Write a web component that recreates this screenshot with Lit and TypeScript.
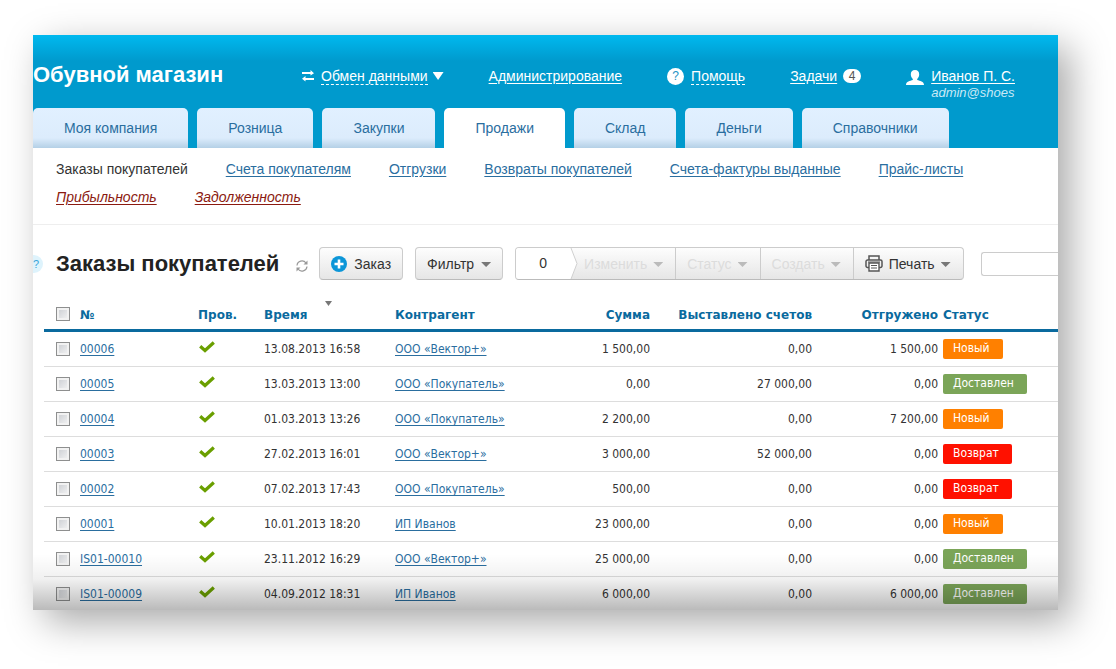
import { LitElement, html, css, svg } from "lit";
import { customElement } from "lit/decorators.js";
import { classMap } from "lit/directives/class-map.js";

interface Order {
  id: string;
  time: string;
  partner: string;
  sum: string;
  billed: string;
  shipped: string;
  status: "new" | "done" | "back";
}

const STATUS = { new: "Новый", done: "Доставлен", back: "Возврат" };

const order = (
  id: string, time: string, partner: string, sum: string,
  billed: string, shipped: string, status: Order["status"],
): Order => ({ id, time, partner, sum, billed, shipped, status });

const ORDERS: Order[] = [
  order("00006", "13.08.2013 16:58", "ООО «Вектор+»", "1 500,00", "0,00", "1 500,00", "new"),
  order("00005", "13.03.2013 13:00", "ООО «Покупатель»", "0,00", "27 000,00", "0,00", "done"),
  order("00004", "01.03.2013 13:26", "ООО «Покупатель»", "2 200,00", "0,00", "7 200,00", "new"),
  order("00003", "27.02.2013 16:01", "ООО «Вектор+»", "3 000,00", "52 000,00", "0,00", "back"),
  order("00002", "07.02.2013 17:43", "ООО «Покупатель»", "500,00", "0,00", "0,00", "back"),
  order("00001", "10.01.2013 18:20", "ИП Иванов", "23 000,00", "0,00", "0,00", "new"),
  order("IS01-00010", "23.11.2012 16:29", "ООО «Вектор+»", "25 000,00", "0,00", "0,00", "done"),
  order("IS01-00009", "04.09.2012 18:31", "ИП Иванов", "6 000,00", "0,00", "6 000,00", "done"),
];

const TABS = ["Моя компания", "Розница", "Закупки", "Продажи", "Склад", "Деньги", "Справочники"];

const SECTIONS = [
  { text: "Заказы покупателей", kind: "current" },
  { text: "Счета покупателям", kind: "" },
  { text: "Отгрузки", kind: "" },
  { text: "Возвраты покупателей", kind: "" },
  { text: "Счета-фактуры выданные", kind: "" },
  { text: "Прайс-листы", kind: "" },
  { text: "Прибыльность", kind: "report" },
  { text: "Задолженность", kind: "report" },
];

const icon = (w: number, h: number, body: unknown) =>
  html`<svg class="icon" width=${w} height=${h} viewBox="0 0 ${w} ${h}" aria-hidden="true">${body}</svg>`;

const swapIcon = icon(12, 12, svg`
  <path d="M0 2h8.500V0L12 3.200 8.500 5.500V4H0z M12 8H3.500V6L0 8.800 3.500 11.500V10H12z" fill="#fff"/>`);
const userIcon = icon(18, 15, svg`
  <path d="M9 0c2.800 0 4.200 1.800 4.200 4.300 0 2-.8 3.700-2 4.700v1c2.700.8 6.800 1.500 6.800 5H0c0-3.500 4.100-4.200 6.800-5V9c-1.200-1-2-2.700-2-4.700C4.800 1.800 6.200 0 9 0z" fill="#fff"/>`);
const refreshIcon = icon(14, 14, svg`
  <path d="M2 6.500a5 5 0 0 1 9-2.500M12 7.500a5 5 0 0 1-9 2.500" fill="none" stroke="#999" stroke-width="1.200"/>
  <path d="M12.500 1.500v4H8.500zM1.500 12.500V8.500H5.500z" fill="#999"/>`);
const plusIcon = icon(16, 16, svg`
  <circle cx="8" cy="8" r="8" fill="#0c96d8"/>
  <path d="M8 3.500v9M3.500 8h9" stroke="#fff" stroke-width="2.600"/>`);
const printIcon = icon(18, 17, svg`
  <path d="M4 5V1h10v4M4 12.500H2.500A1.500 1.500 0 0 1 1 11V6.500A1.500 1.500 0 0 1 2.500 5h13A1.500 1.500 0 0 1 17 6.500V11a1.500 1.500 0 0 1-1.500 1.500H14" fill="none" stroke="#555" stroke-width="1.500"/>
  <path d="M4 8h10v8H4z" fill="#fff" stroke="#555" stroke-width="1.400"/>
  <path d="M6 10.500h6M6 13h6" stroke="#555" stroke-width="1.200"/>
  <path d="M3 7h12" stroke="#555"/>`);
const okIcon = icon(16, 12, svg`
  <path d="M1.200 5.200l4.800 4.300L14.800 1.500" fill="none" stroke="#6a9f00" stroke-width="3.200"/>`);
const chevron = icon(8, 31, svg`
  <path d="M0 0h1l6 15.500L1 31H0z" fill="#fff"/>
  <path d="M1 0l6 15.500L1 31" fill="none" stroke="#d0d0d0"/>`);

@customElement("app-root")
export class AppRoot extends LitElement {
  static styles = css`
    :host {
      display: block;
      box-sizing: border-box;
      padding: 35px 58px 59px 33px;
      background: #fff;
      color: #333;
      font: 14px/16px "Liberation Sans", Arial, sans-serif;
    }
    * { box-sizing: border-box; }
    a { color: #2a6e9f; text-decoration: underline; text-underline-offset: 2px; }
    button { font: inherit; color: inherit; cursor: pointer; }
    .icon { display: block; flex: none; }
    .window {
      position: relative;
      background: #fff;
      box-shadow: 12px 12px 36px rgba(0, 0, 0, 0.34);
    }
    .clip { overflow: hidden; }
    .fade {
      position: absolute;
      inset: auto 0 0 0;
      height: 56px;
      pointer-events: none;
      background: linear-gradient(rgba(0, 0, 0, 0), rgba(0, 0, 0, 0.06) 45%, rgba(0, 0, 0, 0.27));
    }

    header {
      background: linear-gradient(#00b9ef, #009acd 26px);
    }
    .top {
      display: flex;
      gap: 45px;
      height: 73px;
      padding: 29px 43px 0 0;
      color: #fff;
      white-space: nowrap;
    }
    .brand {
      margin: 0 auto 0 0;
      font-size: 22px;
      line-height: 22px;
      font-weight: bold;
    }
    .item { display: flex; align-items: flex-start; gap: 7px; padding-top: 4px; }
    .item a { color: #fff; }
    .item .icon { margin-top: 2px; }
    .item .dashed { text-decoration: none; border-bottom: 1px dashed #fff; }
    .item .tri { margin: 4px 0 0 -2px; }
    .tri {
      width: 11px; height: 8px;
      background: currentColor;
      clip-path: polygon(0 0, 100% 0, 50% 100%);
    }
    .q {
      width: 17px; height: 17px;
      border-radius: 9px;
      background: #fff;
      color: #2492c4;
      font-size: 12px; line-height: 17px;
      text-align: center;
    }
    .badge {
      width: 18px; height: 14px;
      margin: 1px 0 0 -1px;
      border-radius: 7px;
      background: #fff;
      color: #555;
      font-size: 12px; line-height: 14px;
      text-align: center;
    }
    .account { display: grid; }
    .account em { font-size: 13px; line-height: 17px; color: #c9e9f6; }

    .tabs { display: flex; gap: 9px; height: 40px; }
    .tabs a {
      padding: 0 31px;
      border-radius: 5px 5px 0 0;
      background: linear-gradient(#e1f0ff, #dcecfc 75%, #b4d0e6);
      line-height: 41px;
      text-decoration: none;
      white-space: nowrap;
    }
    .tabs .active { background: #fff; }

    .sections {
      display: flex;
      flex-wrap: wrap;
      column-gap: 38px;
      padding: 7px 23px 13px;
      border-bottom: 1px solid #eee;
      line-height: 28px;
    }
    .sections .current { color: #333; text-decoration: none; }
    .sections .report { color: #8b1a10; font-style: italic; }

    .toolbar {
      display: flex;
      align-items: center;
      padding-top: 22px;
      white-space: nowrap;
    }
    .hint {
      width: 10px; height: 18px;
      margin-right: 13px;
      border-radius: 0 9px 9px 0;
      background: #def3fc;
      color: #3ba4d8;
      font-size: 11px; line-height: 18px;
      text-decoration: none;
    }
    h2 { margin: 0; font-size: 22px; line-height: 26px; color: #222; }
    .refresh { margin: 4px 10px 0 16px; padding: 0; border: 0; background: none; }
    .btn, .group {
      display: flex;
      align-items: center;
      height: 33px;
      border: 1px solid #ccc;
      border-bottom-color: #bbb;
      border-radius: 4px;
      background: linear-gradient(#fdfdfd, #e6e6e6);
    }
    .btn { gap: 7px; margin-right: 12px; padding: 0 11px; }
    .btn .tri, .group .tri { width: 10px; height: 5px; margin-top: 2px; color: #777; }
    .group { overflow: hidden; margin-right: 17px; }
    .group button {
      display: flex;
      align-items: center;
      gap: 6px;
      height: 31px;
      padding: 0 12px 0 11px;
      border: 0;
      border-left: 1px solid #ccc;
      background: none;
    }
    .group button:disabled { color: #dcdcdc; cursor: default; }
    .group button:disabled .tri { color: #bbb; }
    .group .first { border-left: 0; padding-left: 6px; }
    .count {
      width: 54px; height: 31px;
      background: #fff;
      line-height: 31px;
      text-align: center;
    }
    .search {
      flex: 1;
      width: 60px; min-width: 0; height: 24px;
      border: 1px solid #ccc;
      border-right: 0;
      border-radius: 3px 0 0 3px;
      background: #fff;
      font: inherit;
    }

    .orders { padding: 17px 0 0 11px; }
    table {
      width: 100%;
      table-layout: fixed;
      border-collapse: separate;
      border-spacing: 0;
      font: 12px/16px "DejaVu Sans Condensed", "Noto Sans", Tahoma, sans-serif;
      white-space: nowrap;
    }
    th, td { padding: 9px 0; border-bottom: 1px solid #ddd; text-align: left; }
    th {
      padding: 10px 0 6px;
      border-bottom: 3px solid #0a6a9e;
      color: #0a6a9e;
      font-family: "DejaVu Sans", Verdana, sans-serif;
      vertical-align: top;
    }
    tr:last-child td { border-bottom: 0; padding-bottom: 8px; }
    .c-check { width: 36px; padding-left: 12px; }
    .c-id { width: 118px; }
    .c-ok { width: 66px; }
    .c-time { width: 131px; }
    .c-sum { width: 90px; text-align: right; }
    .c-billed { width: 162px; text-align: right; }
    .c-shipped { width: 126px; text-align: right; }
    .c-status { width: 120px; padding-left: 5px; }
    .sort { position: relative; }
    .sort .tri {
      position: absolute;
      left: 61px; top: 4px;
      width: 7px; height: 5px;
      color: #777;
    }
    input[type="checkbox"] {
      display: block;
      appearance: none;
      width: 14px; height: 14px;
      margin: 0;
      border: 1px solid #8e8f8f;
      background: linear-gradient(135deg, #c8cbd0, #f6f6f6);
      box-shadow: inset 0 0 0 2px #f2f2f2;
    }
    td .icon { margin: 0 0 4px 1px; }
    .state {
      display: inline-block;
      height: 20px;
      margin: -2px 0;
      padding: 0 13px 0 10px;
      border-radius: 2px;
      color: #fff;
      line-height: 19px;
      vertical-align: top;
    }
    .new { background: #ff8000; }
    .done { background: #7ba558; }
    .back { background: #ff1100; }
  `;

  private row(o: Order) {
    return html`<tr>
      <td class="c-check"><input type="checkbox" aria-label="Выбрать ${o.id}"></td>
      <td><a href="#">${o.id}</a></td>
      <td>${okIcon}</td>
      <td>${o.time}</td>
      <td><a href="#">${o.partner}</a></td>
      <td class="c-sum">${o.sum}</td>
      <td class="c-billed">${o.billed}</td>
      <td class="c-shipped">${o.shipped}</td>
      <td class="c-status"><span class="state ${o.status}">${STATUS[o.status]}</span></td>
    </tr>`;
  }

  render() {
    return html`<div class="window"><div class="clip">
      <header>
        <div class="top">
          <h1 class="brand">Обувной магазин</h1>
          <div class="item">${swapIcon}<a class="dashed" href="#">Обмен данными</a><span class="tri"></span></div>
          <div class="item"><a href="#">Администрирование</a></div>
          <div class="item"><span class="q">?</span><a class="dashed" href="#">Помощь</a></div>
          <div class="item"><a href="#">Задачи</a><span class="badge">4</span></div>
          <div class="item">${userIcon}<div class="account"><a href="#">Иванов П. С.</a><em>admin@shoes</em></div></div>
        </div>
        <nav class="tabs">
          ${TABS.map((t) => html`<a href="#" class=${classMap({ active: t === "Продажи" })}>${t}</a>`)}
        </nav>
      </header>
      <nav class="sections">
        ${SECTIONS.map((s) => html`<a href="#" class=${s.kind}>${s.text}</a>`)}
      </nav>
      <div class="toolbar">
        <a class="hint" href="#">?</a>
        <h2>Заказы покупателей</h2>
        <button class="refresh" aria-label="Обновить">${refreshIcon}</button>
        <button class="btn">${plusIcon}Заказ</button>
        <button class="btn">Фильтр<span class="tri"></span></button>
        <div class="group">
          <span class="count">0</span>${chevron}
          <button class="first" disabled>Изменить<span class="tri"></span></button>
          <button disabled>Статус<span class="tri"></span></button>
          <button disabled>Создать<span class="tri"></span></button>
          <button>${printIcon}Печать<span class="tri"></span></button>
        </div>
        <input class="search" type="text" aria-label="Поиск">
      </div>
      <div class="orders">
        <table>
          <thead><tr>
            <th class="c-check"><input type="checkbox" aria-label="Выбрать все"></th>
            <th class="c-id">№</th>
            <th class="c-ok">Пров.</th>
            <th class="c-time sort">Время<span class="tri"></span></th>
            <th>Контрагент</th>
            <th class="c-sum">Сумма</th>
            <th class="c-billed">Выставлено счетов</th>
            <th class="c-shipped">Отгружено</th>
            <th class="c-status">Статус</th>
          </tr></thead>
          <tbody>${ORDERS.map((o) => this.row(o))}</tbody>
        </table>
      </div>
      <div class="fade"></div>
    </div></div>`;
  }
}
